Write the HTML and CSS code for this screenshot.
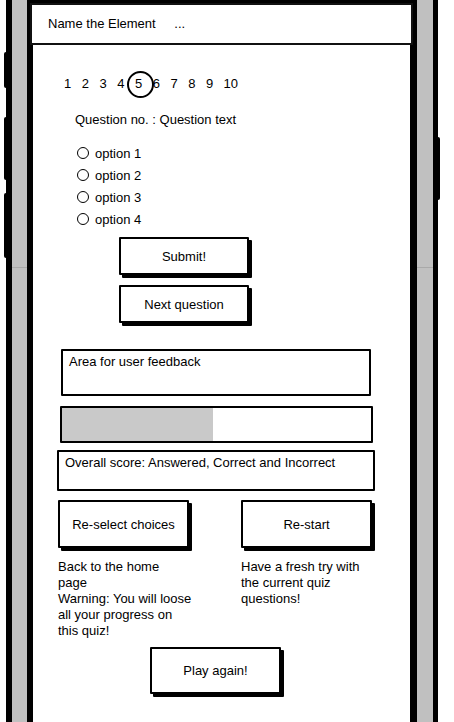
FILE: index.html
```
<!DOCTYPE html>
<html lang="en">
<head>
  <meta charset="UTF-8">
  <meta name="viewport" content="width=device-width, initial-scale=1.0">
  <title>Name the Element</title>
  <link rel="stylesheet" href="styles.css">
</head>
<body>
  <div class="phone">
    <span class="side-btn left one"></span>
    <span class="side-btn left two"></span>
    <span class="side-btn left three"></span>
    <span class="side-btn right"></span>

    <div class="screen">
      <header class="title-bar">
        Name the Element <span class="dots">...</span>
      </header>

      <ol class="pager">
        <li>1</li>
        <li>2</li>
        <li>3</li>
        <li>4</li>
        <li class="current">5</li>
        <li>6</li>
        <li>7</li>
        <li>8</li>
        <li>9</li>
        <li>10</li>
      </ol>

      <p class="question">Question no. : Question text</p>

      <ul class="options">
        <li><span class="radio"></span>option 1</li>
        <li><span class="radio"></span>option 2</li>
        <li><span class="radio"></span>option 3</li>
        <li><span class="radio"></span>option 4</li>
      </ul>

      <div class="actions">
        <button class="sketch-btn">Submit!</button>
        <button class="sketch-btn">Next question</button>
      </div>

      <div class="feedback">Area for user feedback</div>

      <div class="progress">
        <div class="progress-fill" style="width: 49%"></div>
      </div>

      <div class="score">Overall score: Answered, Correct and Incorrect</div>

      <div class="choices">
        <div class="choice">
          <button class="sketch-btn tall">Re-select choices</button>
          <p>Back to the home<br>page<br>Warning: You will loose<br>all your progress on<br>this quiz!</p>
        </div>
        <div class="choice narrow">
          <button class="sketch-btn tall">Re-start</button>
          <p>Have a fresh try with the current quiz questions!</p>
        </div>
      </div>

      <div class="replay">
        <button class="sketch-btn replay-btn">Play again!</button>
      </div>
    </div>
  </div>
</body>
</html>
```

FILE: styles.css
```
body {
  margin: 0;
  width: 454px;
  height: 722px;
  overflow: hidden;
  background: #ffffff;
  color: #000;
  font-family: "Liberation Sans", Arial, sans-serif;
  font-size: 13px;
}

/* phone frame */
.phone {
  position: relative;
  box-sizing: border-box;
  width: 432px;
  height: 722px;
  margin-left: 6px;
  padding: 0 16px 0 15px;
  border-left: 6px solid #000;
  border-right: 5px solid #000;
  background:
    linear-gradient(transparent 267px, #a9a9a9 267px, #a9a9a9 268px, transparent 268px),
    #c0c0c0;
}

.side-btn {
  position: absolute;
  width: 4px;
  background: #000;
  border-radius: 2px;
}
.side-btn.left { left: -8px; }
.side-btn.right { right: -7px; top: 137px; height: 63px; }
.side-btn.one { top: 52px; height: 36px; }
.side-btn.two { top: 117px; height: 63px; }
.side-btn.three { top: 193px; height: 65px; }

.screen {
  box-sizing: border-box;
  height: 100%;
  background: #fff;
  border-top: 3px solid #000;
  border-left: 6px solid #000;
  border-right: 7px solid #000;
}

/* header */
.title-bar {
  box-sizing: border-box;
  height: 42px;
  margin: 0 -3px;
  padding-left: 16px;
  line-height: 38px;
  background: #fff;
  border: 2px solid #111;
}
.title-bar .dots { margin-left: 15px; }

/* question pager */
.pager {
  display: flex;
  gap: 10.5px;
  list-style: none;
  margin: 30px 0 0 31px;
  padding: 0;
  line-height: 18px;
}
.pager li { position: relative; }
.pager .current::before {
  content: "";
  position: absolute;
  left: 50%;
  top: 50%;
  width: 23px;
  height: 23px;
  margin: -13px 0 0 -12px;
  border: 2px solid #000;
  border-radius: 50%;
}

.question {
  margin: 18px 0 0 42px;
  line-height: 18px;
}

.options {
  list-style: none;
  margin: 13px 0 0 44px;
  padding: 0;
}
.options li {
  display: flex;
  align-items: center;
  gap: 6px;
  height: 22px;
}
.radio {
  box-sizing: border-box;
  width: 12px;
  height: 12px;
  border: 1px solid #000;
  border-radius: 50%;
}

/* buttons */
.sketch-btn {
  box-sizing: border-box;
  width: 130px;
  height: 38px;
  padding: 0;
  background: #fff;
  border: 2px solid #000;
  border-radius: 1px;
  box-shadow: 3px 3px 0 #000;
  color: #000;
  font-family: inherit;
  font-size: 13px;
}
.sketch-btn.tall {
  width: 131px;
  height: 48px;
}

.actions {
  display: flex;
  flex-direction: column;
  gap: 10px;
  margin: 7px 0 0 86px;
}

/* result boxes */
.feedback,
.progress,
.score {
  box-sizing: border-box;
  border: 2px solid #000;
  border-radius: 1px;
}
.feedback {
  width: 310px;
  height: 47px;
  margin: 26px 0 0 28px;
  padding: 3px 6px;
}
.progress {
  width: 313px;
  height: 37px;
  margin: 10px 0 0 27px;
}
.progress-fill {
  height: 100%;
  background: #c9c9c9;
}
.score {
  width: 318px;
  height: 41px;
  margin: 7px 0 0 24px;
  padding: 3px 6px;
}

.choices {
  display: grid;
  grid-template-columns: 140px 134px;
  column-gap: 43px;
  margin: 9px 0 0 25px;
}
.choice p {
  margin: 11px 0 0;
  line-height: 16px;
}
.choice.narrow p { width: 130px; }

.replay { margin: 8px 0 0 117px; }
.replay-btn {
  width: 131px;
  height: 47px;
}
```
